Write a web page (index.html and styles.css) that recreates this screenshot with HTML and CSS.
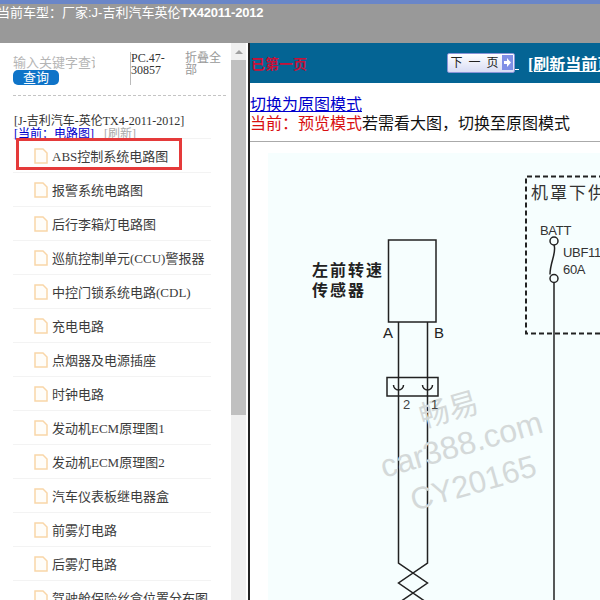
FILE: index.html
```html
<!DOCTYPE html>
<html lang="en">
<head>
    <meta charset="UTF-8">
    <meta name="viewport" content="width=device-width, initial-scale=1.0">
    <title>电路图</title>
    <link rel="stylesheet" href="styles.css">
</head>
<body>
    <div class="top-bar">
        <div class="car-title">当前车型：厂家:J-吉利汽车英伦<b>TX42011-2012</b></div>
    </div>
    <div class="page">
        <div class="side">
            <div class="side-content">
                <div class="search">
                    <div class="search-box">
                        <div class="search-input">输入关键字查询</div>
                        <div class="search-btn">查询</div>
                    </div>
                    <div class="pc-code">PC.47-30857</div>
                    <div class="fold-all">折叠全部</div>
                </div>
                <div class="tree-title">[J-吉利汽车-英伦TX4-2011-2012]</div>
                <div class="tree-current"><a href="#">[当前：电路图]</a><span class="refresh">[刷新]</span></div>
                <ul class="doc-list">
                    <li class="doc-item active"><svg class="doc-icon" viewBox="0 0 14 16"><path d="M1 1h8l4 4v10H1z"/></svg>ABS控制系统电路图</li>
                    <li class="doc-item"><svg class="doc-icon" viewBox="0 0 14 16"><path d="M1 1h8l4 4v10H1z"/></svg>报警系统电路图</li>
                    <li class="doc-item"><svg class="doc-icon" viewBox="0 0 14 16"><path d="M1 1h8l4 4v10H1z"/></svg>后行李箱灯电路图</li>
                    <li class="doc-item"><svg class="doc-icon" viewBox="0 0 14 16"><path d="M1 1h8l4 4v10H1z"/></svg>巡航控制单元(CCU)警报器</li>
                    <li class="doc-item"><svg class="doc-icon" viewBox="0 0 14 16"><path d="M1 1h8l4 4v10H1z"/></svg>中控门锁系统电路(CDL)</li>
                    <li class="doc-item"><svg class="doc-icon" viewBox="0 0 14 16"><path d="M1 1h8l4 4v10H1z"/></svg>充电电路</li>
                    <li class="doc-item"><svg class="doc-icon" viewBox="0 0 14 16"><path d="M1 1h8l4 4v10H1z"/></svg>点烟器及电源插座</li>
                    <li class="doc-item"><svg class="doc-icon" viewBox="0 0 14 16"><path d="M1 1h8l4 4v10H1z"/></svg>时钟电路</li>
                    <li class="doc-item"><svg class="doc-icon" viewBox="0 0 14 16"><path d="M1 1h8l4 4v10H1z"/></svg>发动机ECM原理图1</li>
                    <li class="doc-item"><svg class="doc-icon" viewBox="0 0 14 16"><path d="M1 1h8l4 4v10H1z"/></svg>发动机ECM原理图2</li>
                    <li class="doc-item"><svg class="doc-icon" viewBox="0 0 14 16"><path d="M1 1h8l4 4v10H1z"/></svg>汽车仪表板继电器盒</li>
                    <li class="doc-item"><svg class="doc-icon" viewBox="0 0 14 16"><path d="M1 1h8l4 4v10H1z"/></svg>前雾灯电路</li>
                    <li class="doc-item"><svg class="doc-icon" viewBox="0 0 14 16"><path d="M1 1h8l4 4v10H1z"/></svg>后雾灯电路</li>
                    <li class="doc-item"><svg class="doc-icon" viewBox="0 0 14 16"><path d="M1 1h8l4 4v10H1z"/></svg>驾驶舱保险丝盒位置分布图</li>
                </ul>
            </div>
            <div class="scrollbar">
                <div class="scroll-up"></div>
                <div class="scroll-thumb"></div>
            </div>
        </div>
        <div class="main">
            <div class="tool-bar">
                <span class="first-page">已第一页</span>
                <span class="next-btn">下 一 页<svg class="next-arrow" viewBox="0 0 11 15"><rect width="11" height="15" fill="#7f8fe6"/><path d="M2 6h3V3l4 4.500-4 4.500V9H2z" fill="#fff"/></svg></span>
                <a class="reload btn-tail" href="#">&nbsp;</a>
                <a class="reload" href="#">[刷新当前页]</a>
            </div>
            <div class="mode-info">
                <a href="#">切换为原图模式</a><br>
                <span class="mode-current">当前：预览模式</span>若需看大图，切换至原图模式
            </div>
            <div class="rule"></div>
            <div class="diagram">
                <!-- viewBox uses page coordinates -->
                <svg class="diagram-svg" viewBox="268 153 332 447" width="332" height="447">
                    <g class="line">
                        <rect x="388.500" y="240" width="47.500" height="82"/>
                        <rect x="387" y="377.500" width="51" height="18.500"/>
                        <path d="M398.500 322V563L427.500 583L398.500 603M427.500 322V563L398.500 583L427.500 603"/>
                        <path d="M393.500 385a5 5 0 0 0 10 0M422.500 385a5 5 0 0 0 10 0"/>
                        <path class="dash" d="M600 333.500H526V176.500H600"/>
                        <circle cx="554" cy="241" r="4"/>
                        <circle cx="554" cy="278.500" r="4"/>
                        <path d="M554 245C557 252 550 262 550 274.500M554 282.500V600"/>
                    </g>
                    <text class="cn-bold" x="312" y="276">左前转速</text>
                    <text class="cn-bold" x="312" y="296">传感器</text>
                    <text class="label" x="383" y="338">A</text>
                    <text class="label" x="434" y="338">B</text>
                    <g class="watermark">
                        <text x="423" y="428" transform="rotate(-16 423 428)" font-size="30">畅易</text>
                        <text x="384" y="478" transform="rotate(-16 384 478)" font-size="32">car388.com</text>
                        <text x="414" y="511" transform="rotate(-16 414 511)" font-size="31">CY20165</text>
                    </g>
                    <text class="pin" x="403" y="409">2</text>
                    <text class="pin" x="431" y="409">1</text>
                    <text class="fuse-title" x="531" y="199">机罩下供</text>
                    <text class="fuse" x="540" y="235">BATT</text>
                    <text class="fuse" x="563" y="257">UBF11</text>
                    <text class="fuse" x="563" y="274">60A</text>
                </svg>
            </div>
        </div>
    </div>
</body>
</html>
```

FILE: styles.css
```css
body {
    margin: 0;
    height: 600px;
    overflow: hidden;
    font-family: "Liberation Serif", "Noto Sans CJK SC", serif;
    background-color: #fff;
}

.top-bar {
    height: 39px;
    background-color: #999;
    border-top: 4px solid #6a86c8;
    overflow: hidden;
}

.car-title {
    margin-left: -3px;
    font-family: "Liberation Sans", "Noto Sans CJK SC", sans-serif;
    font-size: 13px;
    line-height: 18px;
    color: #fff;
    white-space: pre;
}

.car-title b {
    letter-spacing: -0.2px;
}

.page {
    display: flex;
    height: 557px;
}

.side {
    width: 248px;
    flex: none;
    display: flex;
    border-right: 2px solid #222;
    overflow: hidden;
}

.side-content {
    width: 231px;
    flex: none;
    padding-left: 13px;
    box-sizing: border-box;
}

.scrollbar {
    width: 15px;
    flex: none;
    background-color: #f0f0f0;
}

.scroll-up {
    height: 17px;
    position: relative;
}

.scroll-up::before {
    content: "";
    position: absolute;
    left: 4px;
    top: 7px;
    border: 4px solid transparent;
    border-top: 0;
    border-bottom: 4px solid #a0a0a0;
}

.scroll-thumb {
    height: 355px;
    background-color: #c0c0c0;
}

.search {
    display: flex;
    width: 213px;
    height: 52px;
    border-bottom: 1px dashed #c4c4c4;
}

.search-box {
    width: 117px;
    padding-top: 12px;
}

.search-input {
    width: 82px;
    height: 15px;
    overflow: hidden;
    white-space: nowrap;
    font-size: 13px;
    line-height: 15px;
    color: #b5b5b5;
}

.search-btn {
    width: 46px;
    height: 15px;
    background-color: #0f74c8;
    border-radius: 5px;
    color: #fff;
    font-size: 13px;
    line-height: 15px;
    text-align: center;
}

.pc-code {
    width: 54px;
    height: 33px;
    margin-top: 9px;
    border-left: 1px solid #bbb;
    font-size: 12px;
    line-height: 12px;
    color: #333;
}

.fold-all {
    width: 36px;
    margin-top: 9px;
    font-family: "Liberation Sans", "Noto Sans CJK SC", sans-serif;
    font-size: 12px;
    line-height: 12px;
    color: #999;
}

.tree-title {
    margin: 18px 0 0 1px;
    font-size: 12px;
    line-height: 14px;
    color: #333;
    white-space: nowrap;
}

.tree-current {
    margin-left: 1px;
    font-size: 12px;
    line-height: 12px;
    white-space: nowrap;
}

.tree-current a {
    color: #00c;
}

.refresh {
    margin-left: 10px;
    color: #aaa;
}

.doc-list {
    list-style: none;
    margin: -2px 0 0;
    padding: 0;
    width: 198px;
    border-top: 1px solid #f3f3f3;
}

.doc-item {
    position: relative;
    display: flex;
    align-items: center;
    height: 33px;
    padding-left: 21px;
    border-bottom: 1px solid #f3f3f3;
    font-size: 13px;
    color: #3c3c3c;
    white-space: nowrap;
}

.doc-item.active::after {
    content: "";
    position: absolute;
    left: 3px;
    top: -1px;
    width: 160px;
    height: 26px;
    border: 3px solid #e53a3a;
}

.doc-icon {
    width: 14px;
    height: 16px;
    margin-right: 4px;
    flex: none;
    fill: #fffdf9;
    stroke: #f9d6a8;
    stroke-width: 1.500;
}

.main {
    flex: 1;
    min-width: 0;
    overflow: hidden;
}

.tool-bar {
    display: flex;
    align-items: center;
    height: 40px;
    background-color: #046494;
    white-space: nowrap;
}

.first-page {
    margin-left: 1px;
    width: 196px;
    flex: none;
    font-size: 14px;
    font-weight: bold;
    color: #c81038;
}

.next-btn {
    position: relative;
    flex: none;
    width: 68px;
    height: 20px;
    box-sizing: border-box;
    padding-right: 13px;
    border: 1px solid #8a94d8;
    border-radius: 2px;
    background: linear-gradient(#fff, #d8dcf4);
    font-size: 12px;
    line-height: 18px;
    word-spacing: 3px;
    text-align: center;
    white-space: pre;
    color: #222;
}

.next-arrow {
    position: absolute;
    right: 1px;
    top: 1px;
    width: 11px;
    height: 15px;
}

.reload {
    font-size: 16px;
    font-weight: bold;
    color: #fff;
}

.btn-tail {
    margin-right: 9px;
}

.mode-info {
    margin-top: 12px;
    font-size: 16px;
    line-height: 19px;
    white-space: nowrap;
    color: #111;
}

.mode-info a {
    color: #00c;
}

.mode-current {
    color: #d80f0f;
}

.rule {
    height: 1px;
    margin-top: 8px;
    background-color: #aaa;
}

.diagram {
    margin: 11px 0 0 18px;
    height: 447px;
    background-color: #f6fefe;
}

.diagram-svg {
    display: block;
}

.line {
    fill: none;
    stroke: #222;
    stroke-width: 1.500;
}

.dash {
    stroke-width: 2;
    stroke-dasharray: 5 3;
}

.cn-bold {
    font-family: "Noto Sans CJK SC", sans-serif;
    font-size: 16px;
    font-weight: bold;
    letter-spacing: 2px;
    fill: #222;
}

.label {
    font-family: "Liberation Sans", sans-serif;
    font-size: 15px;
    fill: #222;
}

.pin {
    font-family: "Liberation Sans", sans-serif;
    font-size: 13px;
    fill: #444;
}

.fuse-title {
    font-family: "Noto Sans CJK SC", sans-serif;
    font-size: 17px;
    letter-spacing: 2px;
    fill: #333;
}

.fuse {
    font-family: "Liberation Sans", sans-serif;
    font-size: 13px;
    letter-spacing: -0.3px;
    fill: #333;
}

.watermark {
    font-family: "Liberation Sans", "Noto Sans CJK SC", sans-serif;
    fill: #d4d9d9;
}
```
